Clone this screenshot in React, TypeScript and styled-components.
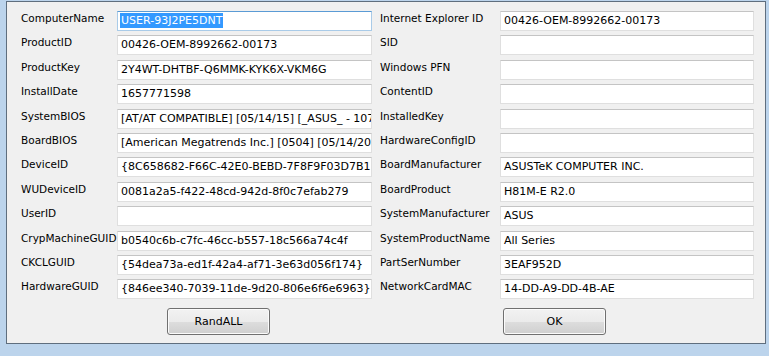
import { Fragment } from 'react'
import styled, { createGlobalStyle } from 'styled-components'

const GlobalStyle = createGlobalStyle`
  html, body {
    margin: 0;
    padding: 0;
    width: 769px;
    height: 356px;
    overflow: hidden;
    background: #bcd4ec;
  }
`

const Window = styled.div`
  box-sizing: border-box;
  margin: 1px 0 0 6px;
  width: 760px;
  height: 343px;
  border: 1px solid #5f6e7e;
  background: #f0f0f0;
  padding: 9px 0 0 14px;
  font-family: 'DejaVu Sans', Verdana, sans-serif;
  color: #000;
`

const Fields = styled.div`
  display: grid;
  grid-template-columns: 96px 255px 128px 254px;
  grid-auto-rows: 20px;
  row-gap: 4.4px;
`

const Label = styled.div<{ $right?: boolean }>`
  font-size: 10.5px;
  line-height: 13px;
  padding-top: 1px;
  padding-left: ${p => (p.$right ? '8px' : '0')};
  white-space: nowrap;
`

const TextBox = styled.div<{ $focused?: boolean }>`
  box-sizing: border-box;
  height: 20px;
  background: #fff;
  border: 1px solid ${p => (p.$focused ? '#a9cbe8' : '#dfdfdf')};
  border-top-color: ${p => (p.$focused ? '#5b9bd5' : '#c4c4c4')};
  padding: 0 0 0 3px;
  font-size: 11px;
  line-height: 18px;
  white-space: nowrap;
  overflow: hidden;
`

const Selected = styled.span`
  background: #3399ff;
  color: #fff;
  padding: 1px;
  margin-left: -1px;
`

const ButtonRow = styled.div`
  display: grid;
  grid-template-columns: 96px 255px 128px 254px;
  margin-top: 9px;
`

const PushButton = styled.button<{ $col: number; $offset: number }>`
  box-sizing: border-box;
  grid-column: ${p => p.$col};
  margin-left: ${p => p.$offset}px;
  width: 103px;
  height: 27px;
  border: 1px solid #707070;
  border-radius: 3px;
  background: linear-gradient(#f2f2f2 0%, #ebebeb 50%, #dddddd 51%, #cfcfcf 100%);
  box-shadow: inset 0 0 0 1px #fbfbfb;
  font-family: 'DejaVu Sans', Verdana, sans-serif;
  font-size: 11px;
  color: #000;
  padding: 0;
`

const left: [string, string][] = [
  ['ComputerName', 'USER-93J2PE5DNT'],
  ['ProductID', '00426-OEM-8992662-00173'],
  ['ProductKey', '2Y4WT-DHTBF-Q6MMK-KYK6X-VKM6G'],
  ['InstallDate', '1657771598'],
  ['SystemBIOS', '[AT/AT COMPATIBLE] [05/14/15] [_ASUS_ - 1072009]'],
  ['BoardBIOS', '[American Megatrends Inc.] [0504] [05/14/2015]'],
  ['DeviceID', '{8C658682-F66C-42E0-BEBD-7F8F9F03D7B1}'],
  ['WUDeviceID', '0081a2a5-f422-48cd-942d-8f0c7efab279'],
  ['UserID', ''],
  ['CrypMachineGUID', 'b0540c6b-c7fc-46cc-b557-18c566a74c4f'],
  ['CKCLGUID', '{54dea73a-ed1f-42a4-af71-3e63d056f174}'],
  ['HardwareGUID', '{846ee340-7039-11de-9d20-806e6f6e6963}'],
]

const right: [string, string][] = [
  ['Internet Explorer ID', '00426-OEM-8992662-00173'],
  ['SID', ''],
  ['Windows PFN', ''],
  ['ContentID', ''],
  ['InstalledKey', ''],
  ['HardwareConfigID', ''],
  ['BoardManufacturer', 'ASUSTeK COMPUTER INC.'],
  ['BoardProduct', 'H81M-E R2.0'],
  ['SystemManufacturer', 'ASUS'],
  ['SystemProductName', 'All Series'],
  ['PartSerNumber', '3EAF952D'],
  ['NetworkCardMAC', '14-DD-A9-DD-4B-AE'],
]

export default function App() {
  return (
    <>
      <GlobalStyle />
      <Window>
        <Fields>
          {left.map(([name, value], i) => (
            <Fragment key={name}>
              <Label>{name}</Label>
              <TextBox $focused={i === 0}>
                {i === 0 ? <Selected>{value}</Selected> : value}
              </TextBox>
              <Label $right>{right[i][0]}</Label>
              <TextBox>{right[i][1]}</TextBox>
            </Fragment>
          ))}
        </Fields>
        <ButtonRow>
          <PushButton $col={2} $offset={50}>RandALL</PushButton>
          <PushButton $col={4} $offset={3}>OK</PushButton>
        </ButtonRow>
      </Window>
    </>
  )
}
